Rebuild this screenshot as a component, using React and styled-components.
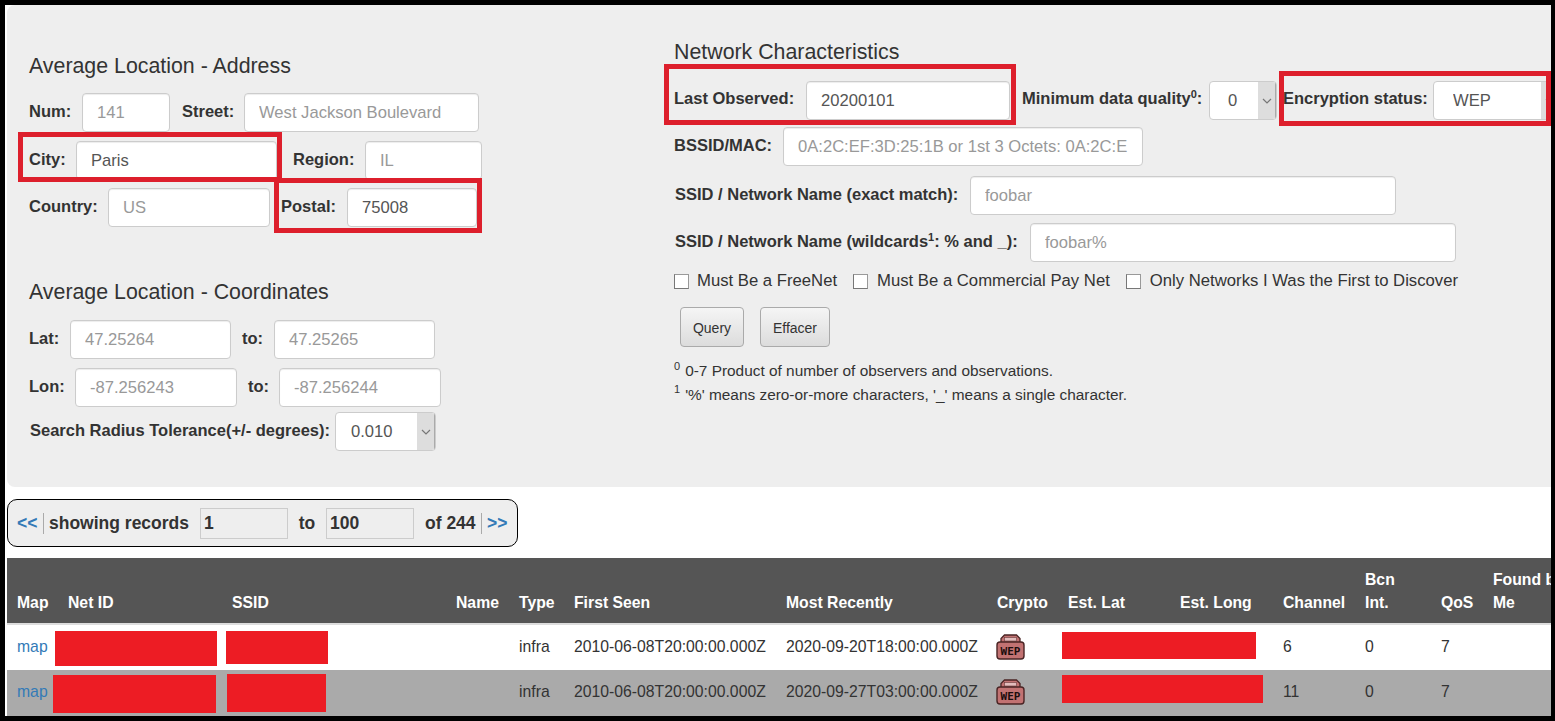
import React from "react";
import styled, { createGlobalStyle } from "styled-components";

const FONT = `"Liberation Sans", Arial, sans-serif`;

const Global = createGlobalStyle`
  html, body { margin: 0; padding: 0; background: #000; }
  body { font-family: ${FONT}; color: #333; font-size: 16px; }
  * { box-sizing: border-box; }
`;

const Frame = styled.div`
  width: 1546px; height: 711px; margin: 5px 0 0 5px;
  background: #fff; overflow: hidden; padding-left: 2px;
`;
const Panel = styled.form`
  display: flex; width: 1570px; height: 482px; margin: 0;
  background: #eee; border-radius: 8px;
`;
const LeftCol = styled.div`
  flex: 0 0 667px; padding: 49px 0 0 22px;
`;
const RightCol = styled.div`
  flex: 1; padding-top: 35px; min-width: 0;
`;
const Heading = styled.h4`
  margin: ${p => p.$mt || 0}px 0 0; font-size: 21.35px; line-height: 24px;
  font-weight: 400; color: #333;
`;
const Row = styled.div`
  display: flex; align-items: center; height: 39px;
  margin-top: ${p => p.$mt || 0}px; margin-left: ${p => p.$ml || 0}px;
`;
const Group = styled.div`
  display: flex; align-items: center; margin-left: ${p => p.$ml || 0}px;
`;
const Highlight = styled(Group)`
  position: relative;
  &::after {
    content: ""; position: absolute; pointer-events: none; z-index: 2;
    top: ${p => p.$t}px; left: ${p => p.$l}px; right: ${p => p.$r}px; bottom: ${p => p.$b}px;
    border: 5px solid #dd1f2c;
  }
`;
const Label = styled.label`
  flex: none; width: ${p => p.$w}px; margin-left: ${p => p.$ml || 0}px; margin-bottom: ${p => p.$up ?? 3}px;
  font-weight: 700; font-size: 16.5px; white-space: nowrap; color: #333;
  sup { font-size: 11px; line-height: 0; }
`;
const TextField = styled.input`
  flex: none; width: ${p => p.$w}px; height: 39px; padding: 6px 14px;
  font: 16.6px ${FONT}; color: #555;
  background: #fff; border: 1px solid #ccc; border-radius: 4px;
  box-shadow: inset 0 1px 1px rgba(0,0,0,.075); outline: none;
  &::placeholder { color: #999; opacity: 1; }
`;
const SelectBox = styled.div`
  flex: none; display: flex; width: ${p => p.$w}px; height: 39px; overflow: hidden;
  background: #fff; border: 1px solid #ccc; border-radius: 4px;
`;
const NativeSelect = styled.select`
  flex: 1; min-width: 0; appearance: none; border: 0; outline: none; background: transparent;
  font: 16.6px ${FONT}; color: #555; padding: 0 0 0 ${p => p.$pad}px;
`;
const SelectArrow = styled.span`
  flex: none; width: 18px; display: flex; align-items: center; justify-content: center;
  background: #ddd; border-right: 1px solid #aaa; color: #777;
`;
const CheckRow = styled.div`
  display: flex; align-items: center; gap: 16px; height: 20px; margin-top: 9px;
`;
const CheckLabel = styled.label`
  display: flex; align-items: center; gap: ${p => p.$gap || 8}px; font-size: 16.7px; color: #333; white-space: nowrap;
`;
const CheckBox = styled.input`
  appearance: none; flex: none; width: 15px; height: 15px; margin: 0;
  background: #fff; border: 1px solid #777; border-top-color: #999; border-right-color: #999;
`;
const Actions = styled.div`
  display: flex; gap: 16px; margin: 16px 0 0 6px;
`;
const Button = styled.button`
  height: 40px; width: ${p => p.$w}px; padding: 2px 0 0; font: 14px ${FONT}; color: #333;
  background: linear-gradient(#f5f5f5, #dcdcdc); border: 1px solid #aaa; border-radius: 4px;
`;
const Notes = styled.div`
  margin-top: 12px; font-size: 15.4px; line-height: 23.5px; color: #333;
  sup { font-size: 11px; line-height: 0; margin-right: 5px; }
`;
const Pager = styled.div`
  display: flex; align-items: center; width: 511px; height: 48px; margin-top: 12px; padding-left: 9px;
  background: #eee; border: 1px solid #000; border-radius: 10px;
  font-weight: 700; font-size: 17.5px; color: #333;
`;
const PagerLink = styled.a`
  color: #337ab7; text-decoration: none; flex: none; width: 21px;
`;
const PagerDivider = styled.span`
  flex: none; width: 1px; height: 21px; background: #aaa; margin: 0 5px;
`;
const PagerText = styled.span`
  flex: none; width: ${p => p.$w}px; margin-left: ${p => p.$ml || 0}px;
  text-align: ${p => p.$align || "left"}; white-space: nowrap;
`;
const PagerField = styled.input`
  flex: none; width: 88px; height: 31px; padding: 0 3px; background: #eee; border: 1px solid #ccc;
  font: 700 17.5px ${FONT}; color: #333; outline: none;
`;
const Table = styled.table`
  width: 1570px; margin-top: 11px; border-collapse: collapse; table-layout: fixed; font-size: 15.75px;
`;
const HeadRow = styled.tr`
  background: #555; height: 65px; border-bottom: 2px solid #ddd;
`;
const Th = styled.th`
  padding: 10px 10px 9px; text-align: left; vertical-align: bottom; color: #fff; font-weight: 700; line-height: 23px;
`;
const BodyRow = styled.tr`
  position: relative; height: 46px; background: ${p => (p.$alt ? "#aaa" : "#fff")};
`;
const Td = styled.td`
  padding: 0 10px 2px; color: #333; white-space: nowrap; vertical-align: middle;
`;
const MapLink = styled.a`
  color: #337ab7; text-decoration: none;
`;
const Redaction = styled.div`
  position: absolute; left: ${p => p.$x}px; top: ${p => p.$y}px; width: ${p => p.$w}px; height: ${p => p.$h}px;
  background: #ed1c24;
`;
const IconSvg = styled.svg`
  display: block; margin-left: -1px;
`;

const Chevron = () => (
  <svg width="10" height="6" viewBox="0 0 10 6" fill="none" stroke="currentColor" strokeWidth="1.2">
    <path d="M1 1l4 4 4-4" />
  </svg>
);

const Select = ({ w, pad, value }) => (
  <SelectBox $w={w}>
    <NativeSelect $pad={pad} defaultValue={value}><option>{value}</option></NativeSelect>
    <SelectArrow><Chevron /></SelectArrow>
  </SelectBox>
);

const WepIcon = () => (
  <IconSvg width="29" height="26" viewBox="0 0 29 26">
    <path d="M5 10V4.5L8.5 1h12L24 4.5V10z" fill="#c27272" stroke="#4a2424" strokeWidth="1.3" />
    <rect x="8.5" y="3.5" width="12" height="3.5" fill="#e3bdbd" stroke="#6a3a3a" strokeWidth=".6" />
    <rect x="1" y="8" width="27" height="17" rx="3" fill="#c27272" stroke="#4a2424" strokeWidth="1.4" />
    <text x="14.5" y="21" textAnchor="middle" fontFamily="'DejaVu Sans Mono', monospace" fontWeight="700" fontSize="11" fill="#1c0c0c">WEP</text>
  </IconSvg>
);

const columns = [
  ["Map", 51], ["Net ID", 164], ["SSID", 224], ["Name", 63], ["Type", 55], ["First Seen", 212],
  ["Most Recently", 211], ["Crypto", 71], ["Est. Lat", 112], ["Est. Long", 103], ["Channel", 82],
  ["Bcn Int.", 76], ["QoS", 52], ["Found by Me", 94],
];

const rows = [
  { first: "2010-06-08T20:00:00.000Z", last: "2020-09-20T18:00:00.000Z", channel: "6",
    marks: [[48, 7, 162, 35], [219, 7, 102, 33], [1055, 8, 194, 27]] },
  { first: "2010-06-08T20:00:00.000Z", last: "2020-09-27T03:00:00.000Z", channel: "11", alt: true,
    marks: [[46, 5, 163, 38], [220, 4, 99, 38], [1055, 5, 201, 28]] },
];

export default function App() {
  return (
    <>
      <Global />
      <Frame>
        <Panel>
          <LeftCol>
            <Heading>Average Location - Address</Heading>
            <Row $mt={15}>
              <Label $w={53}>Num:</Label>
              <TextField $w={88} placeholder="141" />
              <Label $w={62} $ml={12}>Street:</Label>
              <TextField $w={235} placeholder="West Jackson Boulevard" />
            </Row>
            <Row $mt={9}>
              <Highlight $t={-9} $l={-11} $r={-5} $b={-2}>
                <Label $w={47}>City:</Label>
                <TextField $w={201} defaultValue="Paris" />
              </Highlight>
              <Group $ml={16}>
                <Label $w={72}>Region:</Label>
                <TextField $w={117} placeholder="IL" />
              </Group>
            </Row>
            <Row $mt={8}>
              <Label $w={79}>Country:</Label>
              <TextField $w={162} placeholder="US" />
              <Highlight $ml={11} $t={-10} $l={-7} $r={-5} $b={-6}>
                <Label $w={66}>Postal:</Label>
                <TextField $w={130} defaultValue="75008" />
              </Highlight>
            </Row>

            <Heading $mt={53}>Average Location - Coordinates</Heading>
            <Row $mt={16}>
              <Label $w={41}>Lat:</Label>
              <TextField $w={161} placeholder="47.25264" />
              <Group $ml={11}>
                <Label $w={32}>to:</Label>
                <TextField $w={161} placeholder="47.25265" />
              </Group>
            </Row>
            <Row $mt={9}>
              <Label $w={46}>Lon:</Label>
              <TextField $w={162} placeholder="-87.256243" />
              <Group $ml={11}>
                <Label $w={31}>to:</Label>
                <TextField $w={162} placeholder="-87.256244" />
              </Group>
            </Row>
            <Row $mt={5} $ml={1}>
              <Label $w={305}>Search Radius Tolerance(+/- degrees):</Label>
              <Select w={101} pad={15} value="0.010" />
            </Row>
          </LeftCol>

          <RightCol>
            <Heading>Network Characteristics</Heading>
            <Row $mt={17}>
              <Highlight $t={-17} $l={-10} $r={-6} $b={-5}>
                <Label $w={132} $up={5}>Last Observed:</Label>
                <TextField $w={204} defaultValue="20200101" />
              </Highlight>
              <Group $ml={12}>
                <Label $w={187} $up={5}>Minimum data quality<sup>0</sup>:</Label>
                <Select w={68} pad={18} value="0" />
              </Group>
              <Highlight $ml={6} $t={-10} $l={-4} $r={9} $b={-6}>
                <Label $w={150} $up={5}>Encryption status:</Label>
                <Select w={127} pad={19} value="WEP" />
              </Highlight>
            </Row>
            <Row $mt={7}>
              <Label $w={109}>BSSID/MAC:</Label>
              <TextField $w={360} placeholder="0A:2C:EF:3D:25:1B or 1st 3 Octets: 0A:2C:E" />
            </Row>
            <Row $mt={10} $ml={1}>
              <Label $w={295}>SSID / Network Name (exact match):</Label>
              <TextField $w={426} placeholder="foobar" />
            </Row>
            <Row $mt={8} $ml={1}>
              <Label $w={355}>SSID / Network Name (wildcards<sup>1</sup>: % and _):</Label>
              <TextField $w={426} placeholder="foobar%" />
            </Row>
            <CheckRow>
              <CheckLabel><CheckBox type="checkbox" />Must Be a FreeNet</CheckLabel>
              <CheckLabel $gap={9}><CheckBox type="checkbox" />Must Be a Commercial Pay Net</CheckLabel>
              <CheckLabel $gap={9}><CheckBox type="checkbox" />Only Networks I Was the First to Discover</CheckLabel>
            </CheckRow>
            <Actions>
              <Button type="button" $w={64}>Query</Button>
              <Button type="button" $w={70}>Effacer</Button>
            </Actions>
            <Notes>
              <div><sup>0</sup>0-7 Product of number of observers and observations.</div>
              <div><sup>1</sup>'%' means zero-or-more characters, '_' means a single character.</div>
            </Notes>
          </RightCol>
        </Panel>

        <Pager>
          <PagerLink>&lt;&lt;</PagerLink>
          <PagerDivider />
          <PagerText $w={151}>showing records</PagerText>
          <PagerField readOnly value="1" />
          <PagerText $w={38} $align="center">to</PagerText>
          <PagerField readOnly value="100" />
          <PagerText $w={51} $ml={11}>of 244</PagerText>
          <PagerDivider />
          <PagerLink>&gt;&gt;</PagerLink>
        </Pager>

        <Table>
          <colgroup>
            {columns.map(([name, w]) => <col key={name} width={w} />)}
          </colgroup>
          <thead>
            <HeadRow>
              {columns.map(([name]) => <Th key={name}>{name}</Th>)}
            </HeadRow>
          </thead>
          <tbody>
            {rows.map((r, i) => (
              <BodyRow key={i} $alt={r.alt}>
                <Td><MapLink>map</MapLink></Td>
                <Td>{r.marks.map(([x, y, w, h]) => <Redaction key={x} $x={x} $y={y} $w={w} $h={h} />)}</Td>
                <Td />
                <Td />
                <Td>infra</Td>
                <Td>{r.first}</Td>
                <Td>{r.last}</Td>
                <Td><WepIcon /></Td>
                <Td />
                <Td />
                <Td>{r.channel}</Td>
                <Td>0</Td>
                <Td>7</Td>
                <Td />
              </BodyRow>
            ))}
          </tbody>
        </Table>
      </Frame>
    </>
  );
}
